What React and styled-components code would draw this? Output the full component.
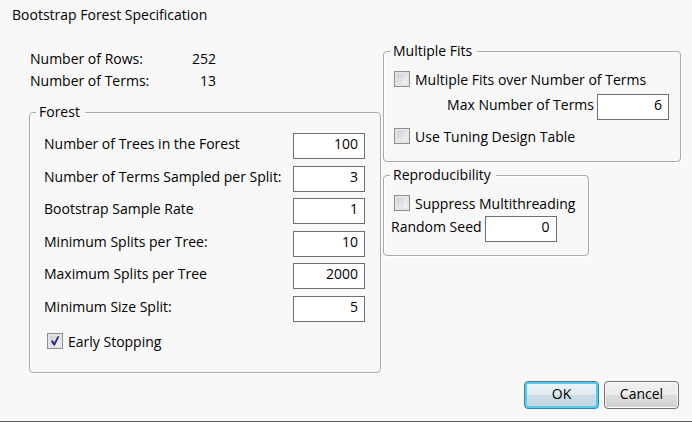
import React from "react";
import styled, { createGlobalStyle } from "styled-components";

const COLORS = {
  surface: "#f8f8f8",
  text: "#000",
  groupBorder: "#a9a9a9",
  inputBorder: "#707070",
};

const FOREST_FIELDS = [
  { id: "trees", label: "Number of Trees in the Forest", value: "100" },
  { id: "terms", label: "Number of Terms Sampled per Split:", value: "3" },
  { id: "rate", label: "Bootstrap Sample Rate", value: "1" },
  { id: "min-splits", label: "Minimum Splits per Tree:", value: "10" },
  { id: "max-splits", label: "Maximum Splits per Tree", value: "2000" },
  { id: "min-size", label: "Minimum Size Split:", value: "5" },
];

const CheckOption = ({ children, ...delegated }) => (
  <CheckLabel>
    <CheckInput type="checkbox" {...delegated} />
    {children}
  </CheckLabel>
);

const App = () => (
  <>
    <GlobalStyle />
    <Dialog>
      <Title>Bootstrap Forest Specification</Title>

      <Columns>
        <Column>
          <Summary>
            <dt>Number of Rows:</dt>
            <dd>252</dd>
            <dt>Number of Terms:</dt>
            <dd>13</dd>
          </Summary>

          <Group>
            <Legend>Forest</Legend>
            <ForestFields>
              {FOREST_FIELDS.map(({ id, label, value }) => (
                <Field key={id} $align="space-between">
                  <FieldLabel htmlFor={id}>{label}</FieldLabel>
                  <NumberInput id={id} defaultValue={value} />
                </Field>
              ))}
              <CheckOption defaultChecked>Early Stopping</CheckOption>
            </ForestFields>
          </Group>
        </Column>

        <Column>
          <Group>
            <Legend>Multiple Fits</Legend>
            <Options>
              <CheckOption>Multiple Fits over Number of Terms</CheckOption>
              <Field $align="flex-end">
                <FieldLabel htmlFor="max-terms">Max Number of Terms</FieldLabel>
                <NumberInput id="max-terms" defaultValue="6" />
              </Field>
              <CheckOption>Use Tuning Design Table</CheckOption>
            </Options>
          </Group>

          <Group $fit>
            <Legend>Reproducibility</Legend>
            <Options $compact>
              <CheckOption>Suppress Multithreading</CheckOption>
              <Field $align="flex-start">
                <FieldLabel htmlFor="seed">Random Seed</FieldLabel>
                <NumberInput id="seed" defaultValue="0" />
              </Field>
            </Options>
          </Group>
        </Column>
      </Columns>

      <Actions>
        <Button $primary>OK</Button>
        <Button>Cancel</Button>
      </Actions>
    </Dialog>
  </>
);

const GlobalStyle = createGlobalStyle`
  *, *::before, *::after {
    box-sizing: border-box;
  }

  body {
    margin: 0;
    background: ${COLORS.surface};
  }

  body, input, button {
    font-family: "Open Sans", "Noto Sans", sans-serif;
    font-size: 14px;
    line-height: 20px;
    color: ${COLORS.text};
  }
`;

const Dialog = styled.main`
  display: flex;
  flex-direction: column;
  min-height: 100vh;
  padding: 5px 11px 12px 12px;
  border-bottom: 1px solid #5a626b;
`;

const Title = styled.h1`
  margin: 0;
  font-size: inherit;
  font-weight: 400;
`;

const Columns = styled.div`
  display: grid;
  grid-template-columns: 352fr 298fr;
  gap: 2px;
  padding: 16px 0 4px 17px;
`;

const Column = styled.div`
  display: flex;
  flex-direction: column;
  gap: 3px;
  min-width: 0;
`;

const Summary = styled.dl`
  display: grid;
  grid-template-columns: 136px 50px;
  row-gap: 2px;
  margin: 0;
  padding: 8px 0 8px 1px;

  dd {
    margin: 0;
    text-align: right;
  }
`;

const Group = styled.fieldset`
  align-self: ${(p) => (p.$fit ? "flex-start" : "stretch")};
  min-width: 0;
  margin: 0;
  padding: 0;
  border: 1px solid ${COLORS.groupBorder};
  border-radius: 4px;
  box-shadow: inset 1px 1px #fff, 1px 1px #fff;
`;

const Legend = styled.legend`
  margin-left: 6px;
  padding: 0 5px 0 3px;
  background: ${COLORS.surface};
`;

const CheckLabel = styled.label`
  display: flex;
  align-items: flex-start;
  gap: 5px;
  height: 20px;
  margin-left: 3px;
  white-space: nowrap;
`;

/* Alternating tracks keep the rows on an even 65px per pair. */
const ForestFields = styled.div`
  display: grid;
  grid-auto-rows: 33px 32px;
  padding: 11px 15px 11px 14px;

  ${CheckLabel} {
    margin-top: 4px;
  }
`;

const Options = styled.div`
  display: flex;
  flex-direction: column;
  gap: ${(p) => (p.$compact ? 2 : 4)}px;
  padding: ${(p) => (p.$compact ? "9px 13px 10px 7px" : "9px 11px 14px 7px")};
`;

const Field = styled.div`
  display: flex;
  align-items: flex-start;
  justify-content: ${(p) => p.$align};
  gap: 3px;
  padding-bottom: 3px;
`;

const FieldLabel = styled.label`
  padding-top: 1px;
  white-space: nowrap;
`;

const NumberInput = styled.input`
  flex: none;
  width: 72px;
  height: 26px;
  margin: 0;
  padding: 0 6px 5px;
  border: 1px solid ${COLORS.inputBorder};
  border-radius: 0;
  background: #fff;
  text-align: right;
`;

const CheckInput = styled.input`
  appearance: none;
  flex: none;
  width: 16px;
  height: 16px;
  margin: 1px 0 0;
  border: 1px solid #8e8f8f;
  background: linear-gradient(135deg, #cbcfd5, #f6f6f6) center / 10px 10px
    no-repeat #e4e4e4;

  &:checked {
    background:
      url("data:image/svg+xml,%3Csvg xmlns='http://www.w3.org/2000/svg' viewBox='0 0 14 14'%3E%3Cpath d='M3 7.2 4.6 6 6.2 8.6 9.6 2.2 11.4 2.2 7 11.6 5.6 11.6Z' fill='%232b2b7f'/%3E%3C/svg%3E")
        center / 14px 14px no-repeat,
      linear-gradient(135deg, #cbcfd5, #f6f6f6) center / 10px 10px no-repeat
        #e4e4e4;
  }
`;

const Actions = styled.div`
  display: flex;
  justify-content: flex-end;
  gap: 5px;
  margin-top: auto;
  padding-right: 2px;
`;

const Button = styled.button`
  width: 75px;
  height: 28px;
  padding: 0 0 2px;
  border: 1px solid ${(p) => (p.$primary ? "#3c7fb1" : "#707070")};
  border-radius: 4px;
  background: ${(p) =>
    p.$primary
      ? "linear-gradient(#eaf2f6 0 10%, #dfe9ef 50%, #cbdde7 50%, #c3d6e0)"
      : "linear-gradient(#f2f2f2, #ebebeb 50%, #dddddd 50%, #cfcfcf)"};
  box-shadow: ${(p) =>
    p.$primary ? "inset 0 0 0 2px #48d0f4" : "inset 0 0 0 1px #fbfbfb"};
`;

export default App;
